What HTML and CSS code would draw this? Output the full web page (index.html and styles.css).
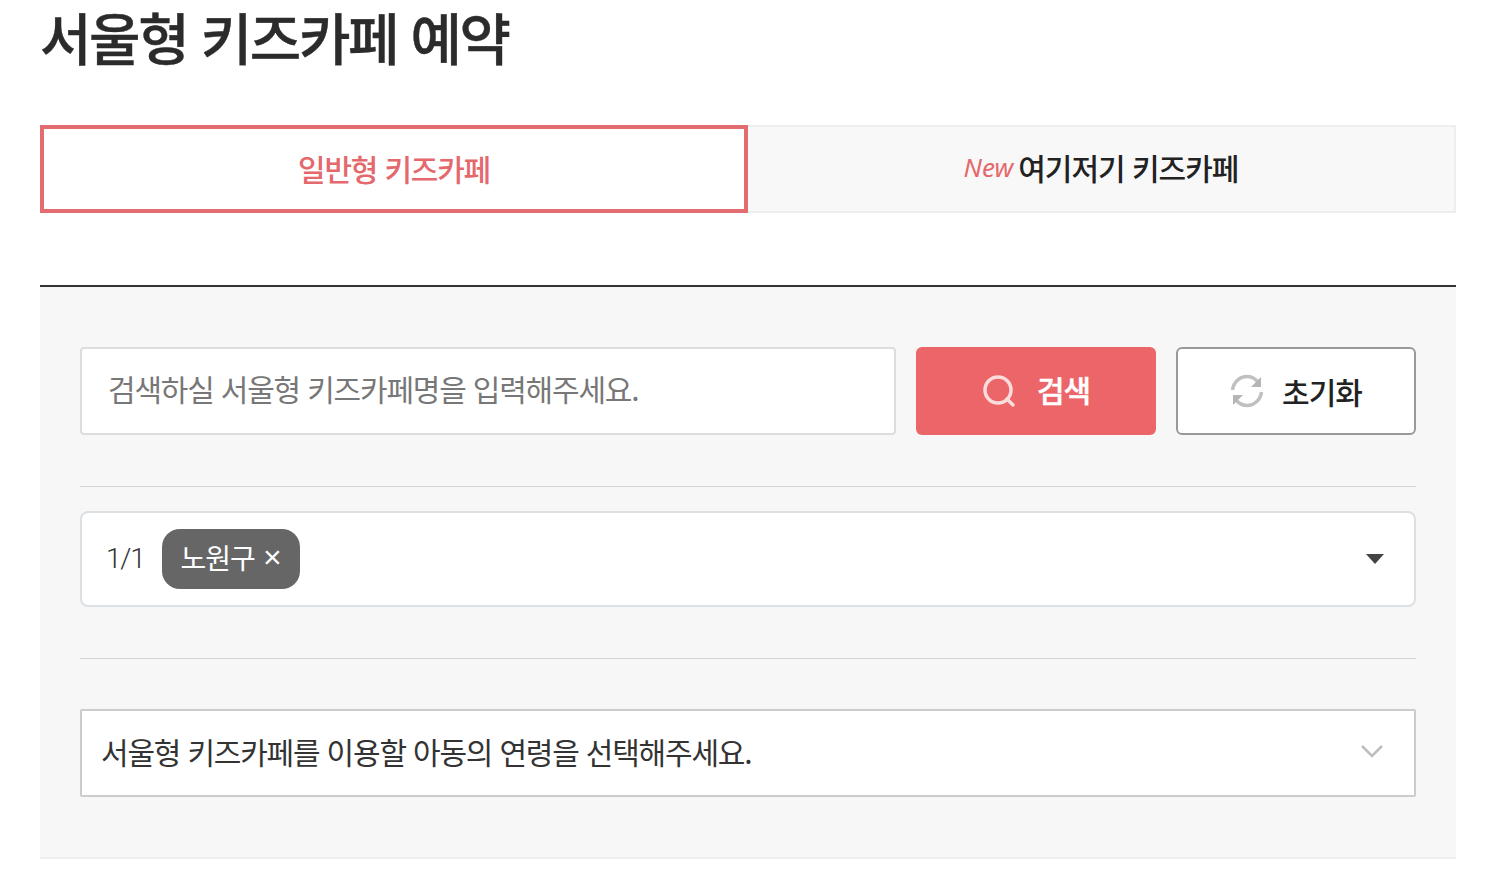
FILE: index.html
```html
<!DOCTYPE html>
<html lang="ko">
<head>
<meta charset="utf-8">
<title>서울형 키즈카페 예약</title>
<link rel="stylesheet" href="styles.css">
</head>
<body>
<main class="page">
  <h1 class="title">서울형 키즈카페 예약</h1>
  <div class="tabs">
    <a class="tab tab-active">일반형 키즈카페</a>
    <a class="tab tab-idle"><em class="new">New</em> 여기저기 키즈카페</a>
  </div>
  <section class="panel">
    <div class="search-row">
      <div class="search-input">검색하실 서울형 키즈카페명을 입력해주세요.</div>
      <button class="btn btn-search">
        <svg class="icon" width="36" height="36" viewBox="0 0 36 36" fill="none"><circle cx="16" cy="17" r="13" stroke="#fbdcdc" stroke-width="3.500"/><path d="M25 26l6 6" stroke="#fbdcdc" stroke-width="3.500" stroke-linecap="round"/></svg>
        <span class="btn-label-search">검색</span>
      </button>
      <button class="btn btn-reset">
        <svg class="icon" width="34" height="34" viewBox="0 0 34 34" fill="none"><path d="M2.500 16C3.500 8 10 2.500 17 2.500c4.500 0 7.500 1.500 10.500 5" stroke="#c0c0c0" stroke-width="3.500"/><path d="M31.500 18c-1 8-7.500 13.500-14.500 13.500-4.500 0-7.500-1.500-10.500-5" stroke="#c0c0c0" stroke-width="3.500"/><path d="M31 3v10H21z" fill="#b5b5b5"/><path d="M3 31V21h10z" fill="#b5b5b5"/></svg>
        <span>초기화</span>
      </button>
    </div>
    <div class="multi-row">
      <div class="multi-select">
        <span class="count">1/1</span>
        <span class="chip">노원구 <span class="chip-x">×</span></span>
        <span class="caret"></span>
      </div>
    </div>
    <div class="age-select">
      <span>서울형 키즈카페를 이용할 아동의 연령을 선택해주세요.</span>
      <svg class="chevron" width="24" height="14" viewBox="0 0 24 14" fill="none"><path d="M2 2l10 10L22 2" stroke="#bdbdbd" stroke-width="2.500"/></svg>
    </div>
  </section>
</main>
</body>
</html>
```

FILE: styles.css
```css
* { box-sizing: border-box; }
html, body { margin: 0; padding: 0; background: #fff; overflow: hidden; }
body { font-family: "Noto Sans CJK KR", "Noto Sans", sans-serif; color: #222; }
.page { width: 1416px; margin-left: 40px; }
.title { margin: 0; height: 125px; font-size: 56px; font-weight: 500; line-height: 71px; letter-spacing: -2.4px; color: #2b2b2b; -webkit-text-stroke: 0.4px #2b2b2b; }
.tabs { display: flex; height: 88px; }
.tab { flex: 0 0 50%; display: flex; align-items: center; justify-content: center; font-size: 30px; letter-spacing: -1.2px; }
.tab-active { border: 4px solid #e36c70; background: #fff; color: #e4686c; font-weight: 500; padding-bottom: 2px; }
.tab-idle { border: 2px solid #eee; border-left: 0; background: #f8f8f8; color: #222; font-weight: 500; gap: 5px; padding-bottom: 5px; letter-spacing: -1px; }
.new { font-style: italic; font-weight: 400; font-size: 26px; color: #e4686c; font-family: "Noto Sans", sans-serif; letter-spacing: 0; }
.panel { margin-top: 72px; height: 574px; padding: 60px 40px 0; background: #f7f7f7; border-top: 2px solid #333; border-bottom: 2px solid #eee; }
.search-row { display: flex; gap: 20px; padding-bottom: 51px; border-bottom: 1px solid #d4d4d4; }
.search-input { flex: 1; display: flex; align-items: center; height: 88px; padding: 0 26px 6px; background: #fff; border: 2px solid #ddd; border-radius: 4px; font-size: 30px; letter-spacing: -1.2px; color: #777; }
.btn { width: 240px; height: 88px; display: flex; align-items: center; justify-content: center; font-family: inherit; font-size: 30px; font-weight: 500; letter-spacing: -1px; border-radius: 6px; padding: 0; }
.btn-search { gap: 19px; background: #ec6569; border: 0; color: #fff; }
.btn-label-search { margin-bottom: 5px; -webkit-text-stroke: 0.4px #fff; }
.btn-reset { gap: 18px; background: #fff; border: 2px solid #999; color: #222; }
.icon { flex: none; }
.multi-row { padding: 24px 0 51px; border-bottom: 1px solid #d4d4d4; }
.multi-select { display: flex; align-items: center; height: 96px; padding: 0 30px 0 24px; background: #fff; border: 2px solid #dbe0e4; border-radius: 8px; font-size: 28px; color: #333; }
.count { margin-right: 17px; font-family: Roboto, sans-serif; font-weight: 300; letter-spacing: -1.200px; margin-bottom: 2px; }
.chip { display: flex; align-items: center; gap: 8px; height: 60px; padding: 0 19px 4px; background: #666; color: #fff; border-radius: 18px; letter-spacing: -1px; font-size: 28px; }
.chip-x { font-family: "Liberation Sans", sans-serif; font-size: 32px; line-height: 1; font-weight: 400; }
.caret { margin-left: auto; width: 0; height: 0; border-left: 9px solid transparent; border-right: 9px solid transparent; border-top: 10px solid #444; }
.age-select { display: flex; align-items: center; justify-content: space-between; height: 88px; margin-top: 50px; padding: 0 30px 4px 19px; background: #fff; border: 2px solid #ccc; border-radius: 2px; font-size: 30px; letter-spacing: -1.2px; color: #333; }
```
